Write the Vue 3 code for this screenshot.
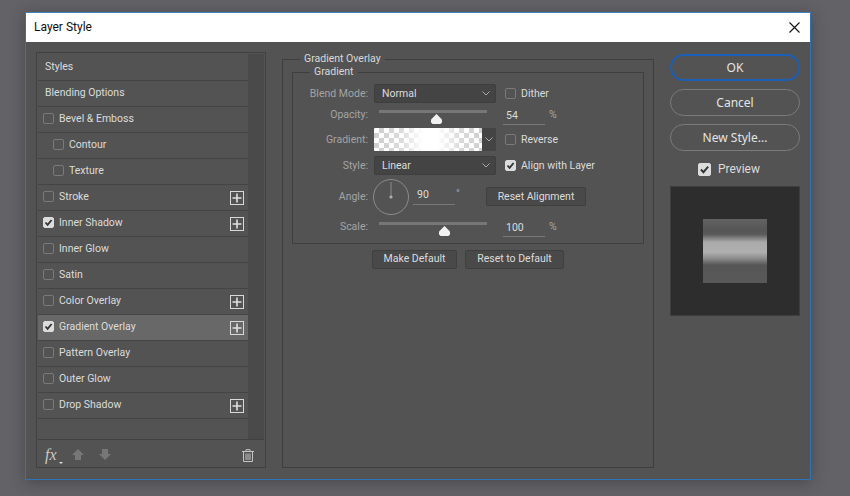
<script setup>
const items = [
  { t: 'Styles', plain: true },
  { t: 'Blending Options', plain: true },
  { t: 'Bevel & Emboss' },
  { t: 'Contour', sub: true },
  { t: 'Texture', sub: true },
  { t: 'Stroke', plus: true },
  { t: 'Inner Shadow', on: true, plus: true },
  { t: 'Inner Glow' },
  { t: 'Satin' },
  { t: 'Color Overlay', plus: true },
  { t: 'Gradient Overlay', on: true, plus: true, sel: true },
  { t: 'Pattern Overlay' },
  { t: 'Outer Glow' },
  { t: 'Drop Shadow', plus: true },
]
</script>

<template>
  <div class="page">
    <div class="win">
      <header class="title">
        <span>Layer Style</span>
        <svg class="close" width="11" height="11" viewBox="0 0 11 11"><path d="M.5 .5L10.5 10.5M10.5 .5L.5 10.5" stroke="#111" stroke-width="1.1" fill="none"/></svg>
      </header>
      <div class="body">
        <aside class="left">
          <div class="listwrap">
            <ul class="list">
              <li v-for="it in items" :key="it.t" class="item" :class="{ sel: it.sel, sub: it.sub, plain: it.plain }">
                <span v-if="!it.plain" class="cb" :class="{ on: it.on }">
                  <svg v-if="it.on" width="11" height="11" viewBox="0 0 11 11"><path d="M2.5 5.5L4.6 7.8L8.6 3" stroke="#333" stroke-width="1.8" fill="none"/></svg>
                </span>
                <span class="itxt">{{ it.t }}</span>
                <svg v-if="it.plus" class="plus" width="14" height="14" viewBox="0 0 14 14"><rect x=".5" y=".5" width="13" height="13" fill="none" stroke="#d8d8d8"/><path d="M7 2.5V11.5M2.5 7H11.5" stroke="#e0e0e0" stroke-width="1.6"/></svg>
              </li>
            </ul>
            <div class="track"></div>
          </div>
          <footer class="foot">
            <span class="fx">fx<i class="tri"></i></span>
            <svg width="14" height="12" viewBox="0 0 14 12"><path d="M7 0L13 6H10V11H4V6H1Z" fill="#777"/></svg>
            <svg width="14" height="12" viewBox="0 0 14 12"><path d="M7 11L13 5H10V0H4V5H1Z" fill="#777"/></svg>
            <svg class="trash" width="12" height="13" viewBox="0 0 12 13"><path d="M0 2.5H12M4 2.5V.7H8V2.5M1.5 2.5V12.5H10.5V2.5M4 4.5V11M6 4.5V11M8 4.5V11" stroke="#c4c4c4" fill="none"/></svg>
          </footer>
        </aside>

        <section class="mid">
          <fieldset class="fs outer">
            <legend>Gradient Overlay</legend>
            <fieldset class="fs inner">
              <legend>Gradient</legend>
              <div class="row r1">
                <label>Blend Mode:</label>
                <div class="select"><span>Normal</span><svg width="8" height="5" viewBox="0 0 8 5"><path d="M.5 .5L4 4L7.5 .5" stroke="#aaa" fill="none"/></svg></div>
                <span class="cb"></span><span class="opt">Dither</span>
              </div>
              <div class="row r2">
                <label>Opacity:</label>
                <div class="slider"><i class="thumb t1"></i></div>
                <span class="num">54</span><span class="unit">%</span>
              </div>
              <div class="row r3">
                <label>Gradient:</label>
                <div class="grad">
                  <div class="swatch"></div>
                  <div class="garrow"><svg width="8" height="5" viewBox="0 0 8 5"><path d="M.5 .5L4 4L7.5 .5" stroke="#aaa" fill="none"/></svg></div>
                </div>
                <span class="cb"></span><span class="opt">Reverse</span>
              </div>
              <div class="row r4">
                <label>Style:</label>
                <div class="select"><span>Linear</span><svg width="8" height="5" viewBox="0 0 8 5"><path d="M.5 .5L4 4L7.5 .5" stroke="#aaa" fill="none"/></svg></div>
                <span class="cb on"><svg width="11" height="11" viewBox="0 0 11 11"><path d="M2.5 5.5L4.6 7.8L8.6 3" stroke="#333" stroke-width="1.8" fill="none"/></svg></span><span class="opt">Align with Layer</span>
              </div>
              <div class="row r5">
                <label>Angle:</label>
                <div class="anglecell">
                  <svg width="36" height="36" viewBox="0 0 36 36"><circle cx="18" cy="18" r="17.5" fill="none" stroke="#8c8c8c"/><path d="M18 3V18" stroke="#8c8c8c"/><circle cx="18" cy="18" r="1.6" fill="#b0b0b0"/></svg>
                  <span class="num ang">90</span><span class="deg">°</span>
                </div>
                <button class="btn reset">Reset Alignment</button>
              </div>
              <div class="row r6">
                <label>Scale:</label>
                <div class="slider"><i class="thumb t2"></i></div>
                <span class="num">100</span><span class="unit">%</span>
              </div>
            </fieldset>
            <div class="defaults">
              <button class="btn mk">Make Default</button>
              <button class="btn rs">Reset to Default</button>
            </div>
          </fieldset>
        </section>

        <aside class="right">
          <button class="pill ok">OK</button>
          <button class="pill">Cancel</button>
          <button class="pill">New Style...</button>
          <div class="prev">
            <span class="cb on big"><svg width="13" height="13" viewBox="0 0 11 11"><path d="M2.5 5.5L4.6 7.8L8.6 3" stroke="#333" stroke-width="1.6" fill="none"/></svg></span>
            <span>Preview</span>
          </div>
          <div class="thumbbox"><div class="sq"></div></div>
        </aside>
      </div>
    </div>
  </div>
</template>

<style>
html, body { margin: 0; background: #636267; }
</style>

<style scoped>
* { box-sizing: border-box; }
.page {
  width: 850px; height: 496px; overflow: hidden; padding: 12px 0 0 25px;
  background: #636267;
  font: 10.5px/14px Roboto, "Noto Sans", sans-serif; color: #dcdcdc;
}
.win {
  width: 786px; height: 468px; border: 1px solid #2e74b8; border-top-color: #3f83c4;
  background: #535353; display: flex; flex-direction: column;
  box-shadow: 0 2px 14px rgba(30, 30, 30, .4);
}
.title {
  height: 29px; background: #fff; color: #111; display: flex; align-items: center;
  justify-content: space-between; padding: 0 10px 1px 8px; font: 12px/16px Roboto, sans-serif;
}
.body { flex: 1; display: flex; padding: 10px 10px 11px 10px; gap: 16px; }

.left { width: 230px; border: 1px solid #414141; display: flex; flex-direction: column; padding: 1px; }
.listwrap { flex: 1; display: flex; min-height: 0; border-bottom: 1px solid #414141; }
.list { list-style: none; margin: 0; padding: 1px 0 0; width: 210px; }
.track { width: 16px; background: #4a4a4a; }
.item {
  height: 26px; border-bottom: 1px solid #444; display: flex; align-items: center;
  padding: 0 4px 2px 5px; gap: 5px; position: relative;
}
.item.plain { padding-left: 7px; }
.item.sub { padding-left: 15px; }
.item.sel { background: #686868; }
.plus { margin-left: auto; position: relative; top: 1px; }
.cb {
  width: 11px; height: 11px; flex: none; border: 1px solid #7a7a7a; border-radius: 2px; display: block;
}
.cb.on { background: #dcdcdc; border-color: #dcdcdc; position: relative; }
.cb svg { display: block; margin: -1px; }
.foot { height: 26px; display: flex; align-items: center; padding: 4px 10px 0 7px; }
.fx { font: italic 16px/18px "Liberation Serif", serif; color: #c8c8c8; width: 26px; position: relative; }
.tri { position: absolute; left: 14px; top: 16px; border: 2px solid transparent; border-top: 2px solid #ddd; }
.foot svg + svg { margin-left: 13px; }
.foot .trash { margin-left: auto; }

.mid { width: 372px; }
.fs { margin: 0; padding: 0; border: 1px solid #3f3f3f; min-width: 0; }
.fs legend { padding: 0 4px; margin-left: 17px; line-height: 14px; height: 14px; color: #d8d8d8; }
.outer { height: 416px; padding: 0 9px; }
.outer > legend { margin-left: 8px; }
.inner { margin-top: -1px; padding: 5px 0 6px; height: 179px; }
.row { display: flex; align-items: center; }
.row label { width: 75px; margin-right: 6px; text-align: right; color: #a4a4a4; flex: none; }
.r1, .r4 { height: 19px; }
.r2, .r6 { height: 20px; }
.r2 { margin-top: 2px; }
.r3 { height: 23px; margin-top: 3px; }
.r4 { margin-top: 5px; }
.r5 { height: 38px; margin-top: 3px; }
.r6 { margin-top: 1px; }
.select {
  width: 122px; height: 19px; background: #444; border: 1px solid #3e3e3e; border-radius: 2px;
  display: flex; align-items: center; justify-content: space-between; padding: 0 5px 0 7px; flex: none;
}
.row .cb { margin-left: 9px; }
.opt { margin-left: 5px; }
.slider { width: 122px; height: 20px; position: relative; flex: none; }
.slider::before {
  content: ""; position: absolute; left: 5px; top: 5px; width: 108px; height: 3px; background: #777;
}
.thumb {
  position: absolute; top: 9px; width: 11px; height: 10px; background: #f2f2f2;
  clip-path: polygon(50% 0, 100% 55%, 100% 85%, 85% 100%, 15% 100%, 0 85%, 0 55%);
}
.t1 { left: 57px; }
.t2 { left: 65px; }
.num {
  width: 42px; margin-left: 7px; height: 17px; line-height: 15px; border-bottom: 1px solid #787878;
  padding-left: 3px; flex: none; margin-top: 2px;
}
.unit { margin-left: 4px; color: #a8a8a8; }
.grad { width: 122px; height: 23px; display: flex; flex: none; border-radius: 1px; overflow: hidden; }
.swatch {
  width: 108px;
  background:
    linear-gradient(90deg, rgba(255,255,255,0) 0, rgba(255,255,255,.25) 25%, #fff 46%, #fff 58%, rgba(255,255,255,.25) 80%, rgba(255,255,255,0) 100%),
    repeating-conic-gradient(#cfcfcf 0 25%, #fff 0 50%) 0 0 / 10px 10px;
}
.garrow { flex: 1; background: #444; display: flex; align-items: center; justify-content: center; }
.anglecell { width: 122px; flex: none; display: flex; align-items: center; position: relative; margin-left: -1px; }
.ang { margin-left: 4px; width: 42px; margin-top: 0; position: relative; top: -1px; padding-left: 4px; line-height: 14px; }
.deg { margin-left: 1px; margin-top: -6px; color: #a8a8a8; }
.btn {
  font: inherit; color: #dcdcdc; background: #494949; border: 1px solid #3f3f3f; border-radius: 2px;
  padding: 0; height: 19px; line-height: 16px;
}
.reset { width: 100px; margin-left: -9px; margin-top: -2px; padding-top: 1px; }
.defaults { display: flex; justify-content: center; gap: 8px; margin-top: 6px; }
.mk { width: 85px; padding-bottom: 1px; }
.rs { width: 99px; padding-bottom: 1px; }

.right { width: 130px; display: flex; flex-direction: column; align-items: stretch; padding-top: 2px; }
.pill {
  height: 27px; margin-bottom: 8px; border: 1px solid #7b7b7b; border-radius: 14px; background: transparent;
  color: #e4e4e4; font: 12px/16px "Noto Sans", sans-serif; padding: 0;
}
.pill.ok { border: 2px solid #1a5fb8; }
.prev { display: flex; align-items: center; gap: 7px; padding-left: 28px; height: 18px; margin-top: 1px; font: 12px/16px Roboto, sans-serif; color: #dcdcdc; }
.big { width: 13px; height: 13px; }
.thumbbox {
  margin-top: 8px; width: 130px; height: 130px; background: #2d2d2d; border: 1px solid #3e3e3e;
  display: flex; align-items: center; justify-content: center;
}
.sq {
  width: 64px; height: 64px;
  background: linear-gradient(180deg, #626262 0, #565656 17%, #5a5a5a 24%, #aaa 36%, #b0b0b0 52%, #8a8a8a 62%, #565656 72%, #585858 100%);
}
</style>
